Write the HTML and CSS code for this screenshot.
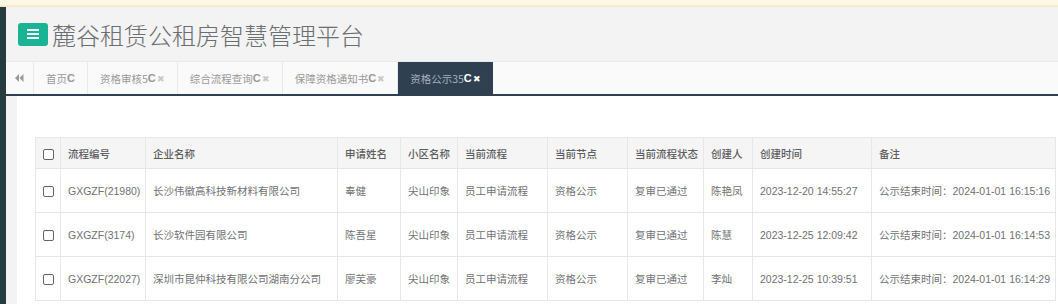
FILE: index.html
```html
<!DOCTYPE html>
<html lang="zh-CN">
  <head>
    <meta charset="UTF-8" />
    <title>麓谷租赁公租房智慧管理平台</title>
    <link rel="stylesheet" href="styles.css">
  </head>
  <body>
    <div class="notice"></div>
    <div class="wrap">
      <div class="side-strip"></div>
      <div class="main">
        <div class="header">
          <button class="menu-btn">
            <svg width="12" height="10" viewBox="0 0 12 10"><rect x="0" y="0" width="12" height="2" fill="#fff"/><rect x="0" y="4" width="12" height="2" fill="#fff"/><rect x="0" y="8" width="12" height="2" fill="#fff"/></svg>
          </button>
          <h1>麓谷租赁公租房智慧管理平台</h1>
        </div>
        <div class="tabs">
          <div class="tab-back">
            <svg width="9" height="8" viewBox="0 0 9 8"><path d="M0 4 L4 0 L4 8 Z M4.5 4 L8.5 0 L8.5 8 Z" fill="#999"/></svg>
          </div>
          <div class="tab">首页<b class="refresh">C</b></div>
          <div class="tab">资格审核5<b class="refresh">C</b><span class="close">✖</span></div>
          <div class="tab">综合流程查询<b class="refresh">C</b><span class="close">✖</span></div>
          <div class="tab">保障资格通知书<b class="refresh">C</b><span class="close">✖</span></div>
          <div class="tab active">资格公示35<b class="refresh">C</b><span class="close">✖</span></div>
        </div>
        <div class="content">
          <div class="gutter"></div>
          <div class="panel">
            <table class="grid">
              <colgroup>
                <col style="width:25px"><col style="width:85px"><col style="width:192px"><col style="width:63px">
                <col style="width:57px"><col style="width:90px"><col style="width:80px"><col style="width:76px">
                <col style="width:49px"><col style="width:119px"><col style="width:184px">
              </colgroup>
              <thead>
                <tr>
                  <th><span class="check"></span></th>
                  <th>流程编号</th><th>企业名称</th><th>申请姓名</th><th>小区名称</th><th>当前流程</th>
                  <th>当前节点</th><th>当前流程状态</th><th>创建人</th><th>创建时间</th><th>备注</th>
                </tr>
              </thead>
              <tbody>
                <tr>
                  <td><span class="check"></span></td>
                  <td>GXGZF(21980)</td><td>长沙伟徽高科技新材料有限公司</td><td>奉健</td><td>尖山印象</td><td>员工申请流程</td>
                  <td>资格公示</td><td>复审已通过</td><td>陈艳凤</td><td>2023-12-20 14:55:27</td><td>公示结束时间：2024-01-01 16:15:16</td>
                </tr>
                <tr>
                  <td><span class="check"></span></td>
                  <td>GXGZF(3174)</td><td>长沙软件园有限公司</td><td>陈吾星</td><td>尖山印象</td><td>员工申请流程</td>
                  <td>资格公示</td><td>复审已通过</td><td>陈慧</td><td>2023-12-25 12:09:42</td><td>公示结束时间：2024-01-01 16:14:53</td>
                </tr>
                <tr>
                  <td><span class="check"></span></td>
                  <td>GXGZF(22027)</td><td>深圳市昆仲科技有限公司湖南分公司</td><td>廖芙豪</td><td>尖山印象</td><td>员工申请流程</td>
                  <td>资格公示</td><td>复审已通过</td><td>李灿</td><td>2023-12-25 10:39:51</td><td>公示结束时间：2024-01-01 16:14:29</td>
                </tr>
              </tbody>
            </table>
          </div>
        </div>
      </div>
    </div>
  </body>
</html>
```

FILE: styles.css
```css
html,
body {
  margin: 0;
  padding: 0;
  overflow: hidden;
  height: 304px;
}
body {
  font-family: "Liberation Sans", "Noto Sans CJK SC", sans-serif;
  background-color: #fff;
  color: #676a6c;
}
.notice {
  height: 5px;
  background-color: #fcf8e3;
  border-bottom: 2px solid #faebcc;
}
.wrap {
  display: flex;
}
.side-strip {
  width: 6px;
  background-color: #253b3e;
}
.main {
  flex: 1;
  min-width: 0;
}
.header {
  height: 54px;
  background-color: #f3f3f4;
  display: flex;
  align-items: center;
  padding-left: 12px;
}
.menu-btn {
  width: 30px;
  height: 23px;
  border: none;
  border-radius: 3px;
  background-color: #1ab394;
  display: flex;
  align-items: center;
  justify-content: center;
  padding: 0;
  margin-right: 4px;
}
.header h1 {
  margin: 0;
  font-family: "Noto Sans CJK SC", sans-serif;
  font-size: 24px;
  font-weight: 300;
  color: #6b6e70;
}
.tabs {
  display: flex;
  height: 32px;
  background-color: #fafafa;
  border-top: 1px solid #e7eaec;
  border-bottom: 2px solid #2f4050;
}
.tab-back {
  width: 27px;
  display: flex;
  align-items: center;
  justify-content: center;
  border-right: 1px solid #e7eaec;
}
.tab {
  display: flex;
  align-items: center;
  padding: 0 12px;
  font-size: 10.5px;
  color: #999;
  border-right: 1px solid #e7eaec;
  font-family: "Noto Sans CJK SC", sans-serif;
}
.tab .refresh {
  font-family: "Liberation Sans", sans-serif;
  font-weight: 700;
  font-size: 11px;
  color: #999;
}
.tab .close {
  font-size: 9px;
  color: #c8c8c8;
  margin-left: 1px;
}
.tab.active {
  background-color: #2f4050;
  color: #a7b1c2;
  border-right: none;
}
.tab.active .refresh,
.tab.active .close {
  color: #fff;
}
.content {
  display: flex;
}
.gutter {
  width: 11px;
  height: 260px;
  background-color: #f3f3f4;
}
.panel {
  flex: 1;
  padding: 41px 0 0 18px;
}
.grid {
  border-collapse: collapse;
  table-layout: fixed;
  width: 1020px;
  font-size: 10.5px;
}
.grid th,
.grid td {
  border: 1px solid #e7e7e7;
  text-align: left;
  padding: 0 7px;
  white-space: nowrap;
  overflow: hidden;
}
.grid th {
  height: 30px;
  background-color: #f5f5f6;
  color: #5e5e5e;
  font-weight: 500;
  font-family: "Noto Sans CJK SC", sans-serif;
}
.grid td {
  height: 43px;
  color: #707274;
}
.grid th:first-child,
.grid td:first-child {
  padding: 0 0 0 7px;
}
.check {
  display: inline-block;
  width: 9px;
  height: 9px;
  border: 1px solid #666;
  border-radius: 2px;
  background-color: #fff;
  vertical-align: middle;
}
```
